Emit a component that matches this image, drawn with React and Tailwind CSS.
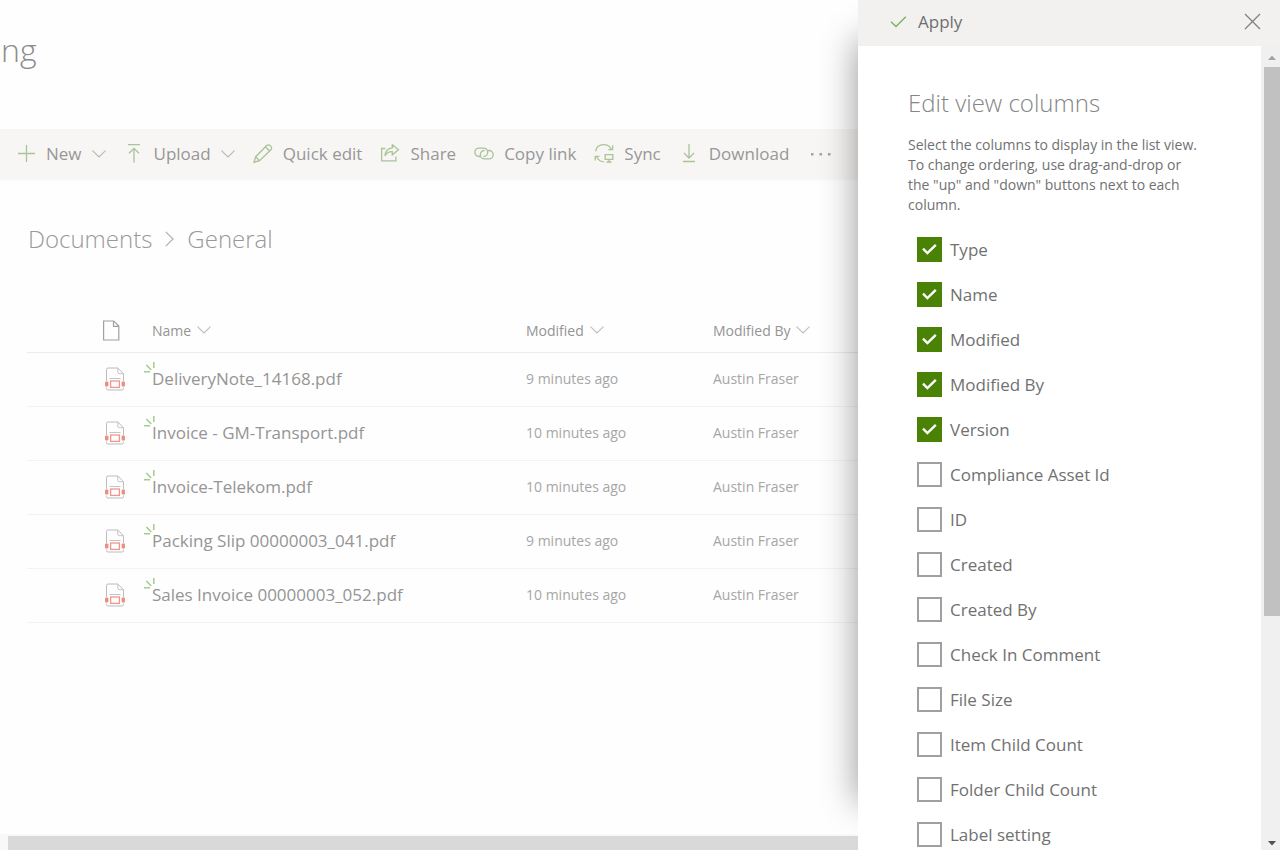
import React from "react";

function Svg({ size = 20, className = "", children }) {
  return (
    <svg
      width={size}
      height={size}
      viewBox={`0 0 ${size} ${size}`}
      fill="none"
      stroke="currentColor"
      strokeWidth="1.3"
      aria-hidden="true"
      className={`shrink-0 ${className}`}
    >
      {children}
    </svg>
  );
}

function Chevron({ className = "" }) {
  return (
    <svg width="14" height="8" viewBox="0 0 14 8" fill="none" stroke="currentColor" strokeWidth="1.1" aria-hidden="true" className={`shrink-0 ${className}`}>
      <path d="M0.5 0.6 7 7 13.5 0.6" />
    </svg>
  );
}

const icons = {
  add: <path d="M10.5 1v17M2 9.5h17" />,
  upload: <path d="M4 0.500h12M10 18.500V4.500M5 9.300 10 4.300l5 5" />,
  edit: (
    <>
      <path d="M1 18.300 2.700 12.700 13.700 1.500a2.300 2.300 0 0 1 3.300 0l.9.9a2.300 2.300 0 0 1 0 3.300L6.600 16.700z" />
      <path d="M12.500 2.800 16.700 7M2.700 12.700 6.600 16.700" />
    </>
  ),
  share: (
    <>
      <path d="M5.300 4.500H1.600v12.300h14.300v-4.300" />
      <path d="M12.300 .8 18.500 5.800l-6.200 5V7.700c-3.500-.1-5.800 1-7.300 4.400.3-4.900 2.700-7.900 7.300-8.300z" />
    </>
  ),
  link: (
    <>
      <path d="M6.300 12.500H5a4.200 4.200 0 0 1 0-8.400h4.500a4.200 4.200 0 0 1 0 8.400" />
      <path d="M13.700 6.500H15a4.200 4.200 0 0 1 0 8.400h-4.500a4.200 4.200 0 0 1 0-8.400" />
    </>
  ),
  sync: (
    <>
      <path d="M1.600 7.300C2.300 3 5.700 .7 9.700 .7c3.300 0 6 1.500 7.400 4.400M18.600 1.300v4.400h-4.300" />
      <path d="M1.200 16.600v-4.300h4.300M2.300 12.500c1.600 3 4.300 5.300 7.600 5.300" />
      <path d="M11.200 10.600h7.600v4.800h-7.600zM15 15.400v2.600M12.500 18h5" />
    </>
  ),
  download: <path d="M4 17.500h12M10 0v13.700M5 9l5 5 5-5" />,
};

const commands = [
  { label: "New", icon: "add", menu: true },
  { label: "Upload", icon: "upload", menu: true },
  { label: "Quick edit", icon: "edit" },
  { label: "Share", icon: "share" },
  { label: "Copy link", icon: "link" },
  { label: "Sync", icon: "sync" },
  { label: "Download", icon: "download" },
];

const files = [
  { name: "DeliveryNote_14168.pdf", modified: "9 minutes ago", by: "Austin Fraser" },
  { name: "Invoice - GM-Transport.pdf", modified: "10 minutes ago", by: "Austin Fraser" },
  { name: "Invoice-Telekom.pdf", modified: "10 minutes ago", by: "Austin Fraser" },
  { name: "Packing Slip 00000003_041.pdf", modified: "9 minutes ago", by: "Austin Fraser" },
  { name: "Sales Invoice 00000003_052.pdf", modified: "10 minutes ago", by: "Austin Fraser" },
];

const columns = [
  { label: "Type", on: true },
  { label: "Name", on: true },
  { label: "Modified", on: true },
  { label: "Modified By", on: true },
  { label: "Version", on: true },
  { label: "Compliance Asset Id" },
  { label: "ID" },
  { label: "Created" },
  { label: "Created By" },
  { label: "Check In Comment" },
  { label: "File Size" },
  { label: "Item Child Count" },
  { label: "Folder Child Count" },
  { label: "Label setting" },
];

function PdfIcon() {
  return (
    <svg width="20" height="24" viewBox="0 0 20 24" fill="none" aria-hidden="true">
      <path d="M1.500 14V2.500a1.500 1.500 0 0 1 1.500-1.500h9.800l5.700 5.700V14M1.500 20.500v1a1.500 1.500 0 0 0 1.500 1.500h14a1.500 1.500 0 0 0 1.500-1.500v-1" stroke="#bcbcbc" />
      <path d="M12.800 1v4.300a1.400 1.400 0 0 0 1.400 1.400h4.300M4.500 11.500h11" stroke="#c4c4c4" />
      <rect x="5.600" y="14" width="8.800" height="6.400" stroke="#f0968a" strokeWidth="1.300" />
      <rect x="0" y="14.500" width="3.400" height="5" rx="1" fill="#ee8d80" />
      <rect x="16.600" y="14.500" width="3.400" height="5" rx="1" fill="#ee8d80" />
    </svg>
  );
}

function NewMark() {
  return (
    <svg width="12" height="12" viewBox="0 0 12 12" fill="none" stroke="#a6cb8d" strokeWidth="1.500" aria-hidden="true" className="absolute -left-2 -top-1">
      <path d="M0 9.800h6M2.300 3 7.300 8M9.800 0v6" />
    </svg>
  );
}

function ColumnHead({ children }) {
  return (
    <button type="button" className="flex items-center gap-1.5 text-[14px] text-[#949494]">
      {children}
      <Chevron className="text-[#bdbdbd]" />
    </button>
  );
}

function Library() {
  return (
    <main className="flex min-w-0 flex-1 flex-col overflow-hidden bg-[#fefefe]">
      <header className="flex h-[129px] shrink-0 items-start pt-7">
        <h1 className="pl-px text-[32px] leading-[44px] font-light text-[#8c8c8c]">ng</h1>
      </header>

      <div role="toolbar" aria-label="Commands" className="flex h-[52px] shrink-0 items-center gap-[18px] border-b-2 border-[#fafafa] bg-[#f7f6f5] pl-4 text-[17px] text-[#979797]">
        {commands.map((c) => (
          <button key={c.label} type="button" className="flex shrink-0 items-center gap-2.5 whitespace-nowrap">
            <Svg className="text-[#a9c498]">{icons[c.icon]}</Svg>
            {c.label}
            {c.menu && <Chevron className="text-[#b3b9b3]" />}
          </button>
        ))}
        <button type="button" aria-label="More commands" className="ml-1 shrink-0">
          <svg width="20" height="4" viewBox="0 0 20 4" fill="#a3a3a3" aria-hidden="true">
            <rect x="0" y="1" width="2.500" height="2.500" />
            <rect x="8.500" y="1" width="2.500" height="2.500" />
            <rect x="17" y="1" width="2.500" height="2.500" />
          </svg>
        </button>
      </div>

      <nav aria-label="Breadcrumb" className="flex h-[116px] shrink-0 items-center gap-3 pl-7 text-[24px] font-light text-[#999]">
        <a href="#documents">Documents</a>
        <svg width="11" height="16" viewBox="0 0 11 16" fill="none" stroke="#b0b0b0" strokeWidth="1.200" aria-hidden="true">
          <path d="M1.800.800 9 8 1.800 15.200" />
        </svg>
        <a href="#general">General</a>
      </nav>

      <div className="flex-1 overflow-hidden pl-[27px]">
        <table className="w-full min-w-[831px] table-fixed border-collapse text-left">
          <colgroup>
            <col className="w-[125px]" />
            <col />
            <col className="w-[187px]" />
            <col className="w-[145px]" />
          </colgroup>
          <thead>
            <tr className="h-[55px] border-b border-[#ebebeb]">
              <th className="pt-3 pl-[75px] font-normal">
                <svg width="19" height="21" viewBox="0 0 19 21" fill="none" stroke="#a0a0a0" strokeWidth="1.200" role="img" aria-label="Type">
                  <path d="M1.600 1h10.200l5 5v14H1.600zM11.500 1v5.300h5.300" />
                </svg>
              </th>
              <th className="pt-3 font-normal"><ColumnHead>Name</ColumnHead></th>
              <th className="pt-3 font-normal"><ColumnHead>Modified</ColumnHead></th>
              <th className="pt-3 font-normal"><ColumnHead>Modified By</ColumnHead></th>
            </tr>
          </thead>
          <tbody>
            {files.map((f) => (
              <tr key={f.name} className="h-[54px] border-b border-[#f3f3f3] text-[14px] text-[#a6a6a6]">
                <td className="pl-[78px]"><PdfIcon /></td>
                <td>
                  <a href="#file" className="relative inline-block text-[17px] text-[#959595]">
                    <NewMark />
                    {f.name}
                  </a>
                </td>
                <td className="pb-0.5">{f.modified}</td>
                <td className="pb-0.5">{f.by}</td>
              </tr>
            ))}
          </tbody>
        </table>
      </div>

      <div className="h-4 shrink-0 bg-[#f8f8f8] pt-0.5 pl-2">
        <div className="h-full bg-[#d9d9d9]" />
      </div>
    </main>
  );
}

function ColumnOption({ label, on }) {
  return (
    <li className="h-[45px]">
      <label className="inline-flex h-[25px] items-center gap-2 text-[17px] text-[#717171]">
        <span className="relative block size-[25px]">
          <input
            type="checkbox"
            defaultChecked={on}
            className="peer block size-[25px] appearance-none border-2 border-[#a0a0a0] bg-white checked:border-[#498205] checked:bg-[#498205]"
          />
          <svg width="25" height="25" viewBox="0 0 25 25" fill="none" stroke="#fff" strokeWidth="2.400" aria-hidden="true" className="pointer-events-none absolute inset-0 hidden peer-checked:block">
            <path d="M6 11.700 10.400 16 18.800 7.800" />
          </svg>
        </span>
        {label}
      </label>
    </li>
  );
}

function EditPanel() {
  return (
    <aside className="relative h-full w-[422px] shrink-0">
      <div className="absolute inset-x-0 top-10 bottom-12 shadow-[0_0_34px_0_rgba(0,0,0,0.42)]" />
      <div className="relative flex h-full flex-col bg-white">
        <div className="flex h-[46px] shrink-0 items-center justify-between bg-[#f2f1f0] pr-[19px] pb-[3px] pl-8">
          <button type="button" className="flex items-center gap-[11px] text-[17px] text-[#6f6f6f]">
            <svg width="17" height="12" viewBox="0 0 17 12" fill="none" stroke="#7fb25c" strokeWidth="1.400" aria-hidden="true">
              <path d="M1 5.800 6 10.600 15.800.800" />
            </svg>
            Apply
          </button>
          <button type="button" aria-label="Close">
            <svg width="17" height="17" viewBox="0 0 17 17" fill="none" stroke="#808080" strokeWidth="1.300" aria-hidden="true">
              <path d="M1 1 16 16M16 1 1 16" />
            </svg>
          </button>
        </div>
        <div className="flex min-h-0 flex-1">
          <section className="min-w-0 flex-1 overflow-hidden px-[50px] pt-[39px]">
            <h2 className="text-[24px] leading-9 font-light text-[#858585]">Edit view columns</h2>
            <p className="mt-3.5 max-w-[296px] text-[14px] leading-5 text-[#717171]">
              Select the columns to display in the list view. To change ordering, use drag-and-drop or the "up" and "down" buttons next to each column.
            </p>
            <ul className="mt-[22px] pl-[9px]">
              {columns.map((c) => (
                <ColumnOption key={c.label} {...c} />
              ))}
            </ul>
          </section>
          <div aria-hidden="true" className="flex w-[19px] shrink-0 flex-col items-center bg-[#f0f0f0] pl-[3px]">
            <svg width="16" height="21" viewBox="0 0 16 21" fill="#a3a3a3" className="shrink-0">
              <path d="M4 14 8 9.500 12 14z" />
            </svg>
            <div className="h-[549px] w-full bg-[#c1c1c1]" />
            <svg width="16" height="16" viewBox="0 0 16 16" fill="#505050" className="mt-auto shrink-0">
              <path d="M4 7 8 11.500 12 7z" />
            </svg>
          </div>
        </div>
      </div>
    </aside>
  );
}

export default function App() {
  return (
    <div className="flex h-screen overflow-hidden bg-white font-['Open_Sans','Noto_Sans',sans-serif]">
      <Library />
      <EditPanel />
    </div>
  );
}
